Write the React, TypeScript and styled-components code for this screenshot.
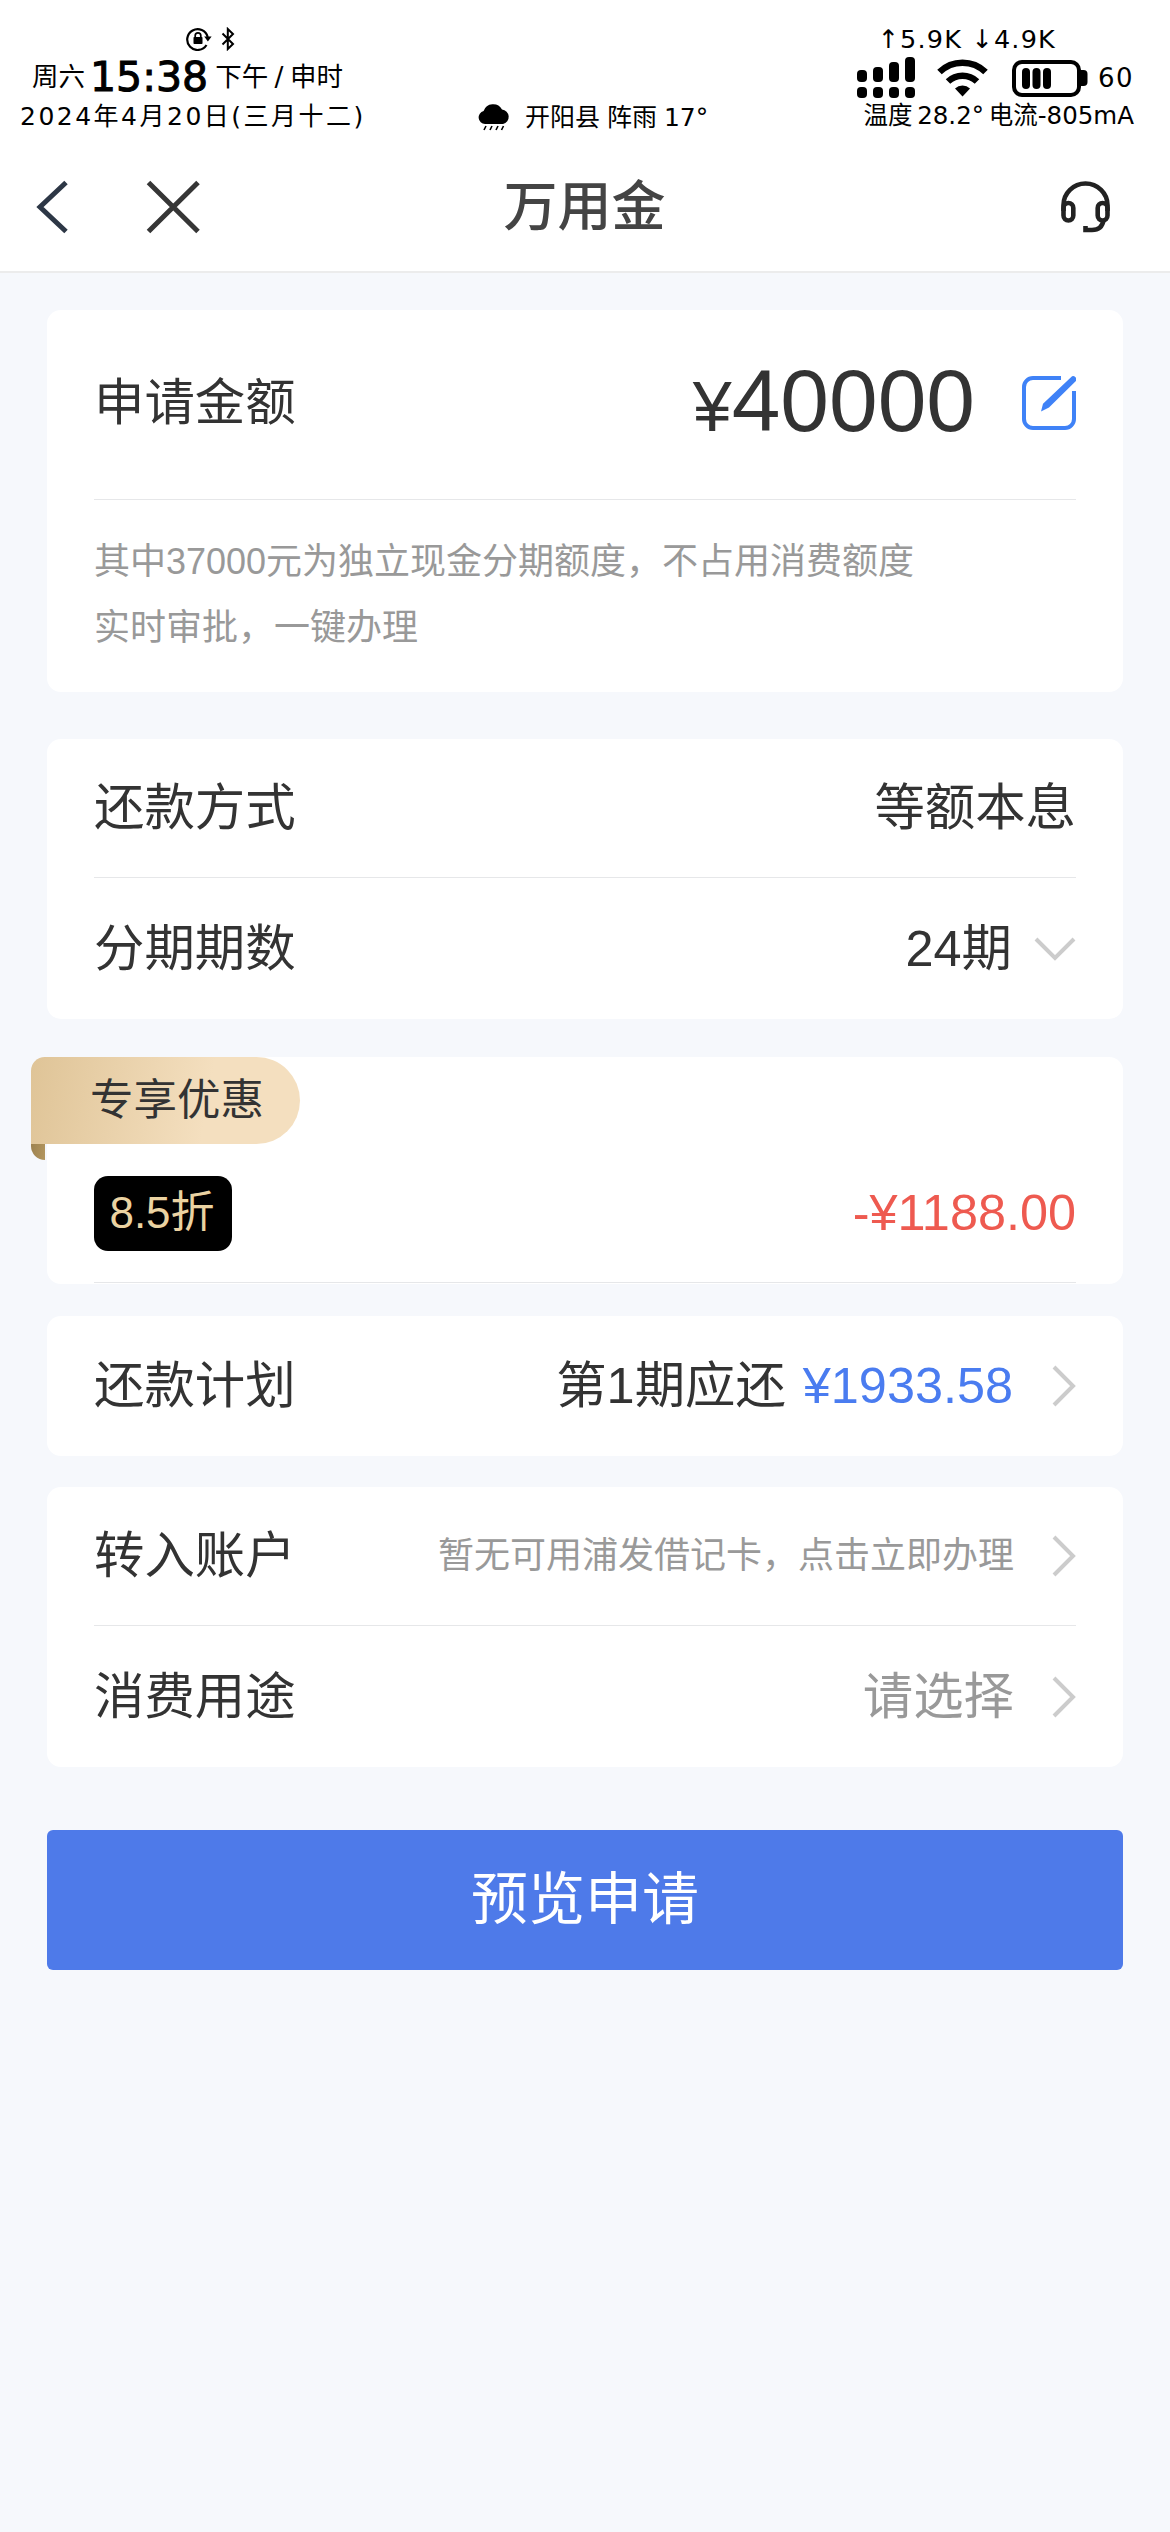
import React from 'react';
import styled, { createGlobalStyle } from 'styled-components';

const GlobalStyle = createGlobalStyle`
  * { box-sizing: border-box; }
  body {
    margin: 0;
    background: #f6f8fc;
    font-family: "Liberation Sans", "Noto Sans CJK SC", sans-serif;
    color: #333;
  }
`;

const Screen = styled.div`
  width: 1170px;
  height: 2532px;
  display: flex;
  flex-direction: column;
  overflow: hidden;
  background: #f6f8fc;
`;

const Header = styled.header`
  height: 273px;
  background: #fff;
  border-bottom: 2px solid #ececec;
`;

const StatusBar = styled.div`
  height: 140px;
  padding: 26px 36px 0 20px;
  display: grid;
  grid-template-columns: 420px 1fr 320px;
  color: #000;
`;

const StatusColumn = styled.div<{ $align?: string }>`
  display: flex;
  flex-direction: column;
  align-items: ${(p) => p.$align ?? 'flex-start'};
`;

const StatusLine = styled.div<{ $height: number; $indent?: number; $end?: number }>`
  height: ${(p) => p.$height}px;
  display: flex;
  align-items: center;
  padding-left: ${(p) => p.$indent ?? 0}px;
  padding-right: ${(p) => p.$end ?? 0}px;
`;

const StatusText = styled.span<{ $size?: number; $track?: number; $left?: number; $word?: number }>`
  font-family: "DejaVu Sans", "Noto Sans CJK SC", sans-serif;
  font-size: ${(p) => p.$size ?? 25}px;
  letter-spacing: ${(p) => p.$track ?? 0}px;
  word-spacing: ${(p) => p.$word ?? 0}px;
  margin-left: ${(p) => p.$left ?? 0}px;
  line-height: 1;
  white-space: nowrap;
`;

const Clock = styled(StatusText)`
  -webkit-text-stroke: 1px #000;
`;

const NavBar = styled.nav`
  height: 133px;
  padding: 0 60px 0 35px;
  display: grid;
  grid-template-columns: 300px 1fr 300px;
  align-items: center;
`;

const NavLeft = styled.div`
  display: flex;
  align-items: center;
  gap: 76px;
`;

const NavRight = styled.div`
  display: flex;
  justify-content: flex-end;
`;

const Title = styled.h1`
  margin: 1px 0 0 24px;
  font-size: 54px;
  line-height: 60px;
  font-weight: 500;
  color: #444;
  text-align: center;
`;

const Main = styled.main`
  display: flex;
  flex-direction: column;
  padding: 37px 47px 0;
`;

const Card = styled.section<{ $top?: number }>`
  margin-top: ${(p) => p.$top ?? 0}px;
  padding: 0 47px;
  background: #fff;
  border-radius: 14px;
`;

const Row = styled.div<{ $height: number; $divided?: boolean; $lift?: number }>`
  height: ${(p) => p.$height}px;
  padding-bottom: ${(p) => p.$lift ?? 0}px;
  display: flex;
  align-items: center;
  justify-content: space-between;
  border-bottom: ${(p) => (p.$divided ? '1px solid #e6e7e9' : 'none')};
`;

const Label = styled.span`
  font-size: 50.4px;
  line-height: 60px;
  white-space: nowrap;
`;

const Value = styled.div<{ $gap?: number }>`
  display: flex;
  align-items: center;
  gap: ${(p) => p.$gap ?? 0}px;
`;

const Money = styled.span<{ $color: string }>`
  font-size: 50.4px;
  line-height: 60px;
  color: ${(p) => p.$color};
`;

const Installment = styled(Label)`
  word-spacing: 3px;
`;

const Hint = styled.span<{ $size: number }>`
  font-size: ${(p) => p.$size}px;
  line-height: 60px;
  color: #999;
  white-space: nowrap;
`;

const Amount = styled.span`
  padding-top: 2px;
  font-size: 87.5px;
  line-height: 100px;
  white-space: nowrap;
`;

const Currency = styled.span`
  font-size: 70px;
`;

const Note = styled.p`
  margin: 0;
  padding: 29px 0 31px;
  font-size: 36px;
  line-height: 66px;
  color: #999;
`;

const PromoCard = styled(Card)`
  position: relative;
  height: 227px;
  padding-top: 87px;
`;

const Ribbon = styled.div`
  position: absolute;
  left: -16px;
  top: 0;
  width: 269px;
  height: 87px;
  padding-left: 59px;
  border-radius: 14px 44px 44px 0;
  background: linear-gradient(100deg, #dfc497 0%, #f4dfbf 65%, #f4dfbf 100%);
  font-size: 43.5px;
  line-height: 86px;
  white-space: nowrap;

  &::after {
    content: "";
    position: absolute;
    left: 0;
    top: 87px;
    width: 14px;
    height: 16px;
    border-radius: 0 0 0 14px;
    background: linear-gradient(100deg, #9d8250, #b3965f);
  }
`;

const Badge = styled.span`
  width: 138px;
  height: 75px;
  padding-right: 2px;
  border-radius: 14px;
  background: #000;
  color: #ebd3a2;
  font-size: 44px;
  line-height: 73px;
  text-align: center;
`;

const Submit = styled.button`
  margin-top: 63px;
  height: 140px;
  border: 0;
  border-radius: 6px;
  background: #4e7ae9;
  color: #fff;
  font-family: inherit;
  font-size: 57px;
  line-height: 60px;
  padding: 0 0 2px;
`;

const Icon = styled.svg<{ $left?: number }>`
  display: block;
  flex: none;
  fill: none;
  margin-left: ${(p) => p.$left ?? 0}px;
`;

const ChevronRight = () => (
  <Icon width="24" height="42" viewBox="0 0 24 42" stroke="#ccc" strokeWidth="4">
    <path d="M2 2 21 21 2 40" />
  </Icon>
);

const ChevronDown = () => (
  <Icon width="42" height="26" viewBox="0 0 42 26" stroke="#ccc" strokeWidth="4">
    <path d="M2 3 21 22 40 3" />
  </Icon>
);

const EditIcon = () => (
  <Icon width="54" height="54" viewBox="0 0 54 54" stroke="#3f82f7" strokeWidth="4">
    <path d="M39 2H11a9 9 0 0 0-9 9v32a9 9 0 0 0 9 9h32a9 9 0 0 0 9-9V15" />
    <path d="M49 1.200a3 3 0 0 1 4.400 4.200L27 31.500 19 35.500 21 27.800Z" fill="#3f82f7" stroke="none" />
  </Icon>
);

const Headset = () => (
  <Icon width="49" height="52" viewBox="0 0 49 52" stroke="#222" strokeWidth="4.6">
    <path d="M2.500 30V24a22 21.500 0 0 1 44 0V30" />
    <rect x="2.500" y="22" width="9.800" height="17.500" rx="4.900" />
    <rect x="36.700" y="22" width="9.800" height="17.500" rx="4.900" />
    <path d="M42.500 39C41.500 46 37 49 31 49H24.500V45" />
  </Icon>
);

const RotationLock = () => (
  <Icon width="26" height="24" viewBox="0 0 26 24" stroke="#000" strokeWidth="2.2">
    <path d="M20.500 18A10.400 10.400 0 1 1 21.700 10" />
    <path d="M18.200 9.400h7.400l-3.700 5Z" fill="#000" stroke="none" />
    <rect x="7.500" y="10" width="9" height="7" rx="0.8" fill="#000" stroke="none" />
    <path d="M9.200 10.500V8.600a2.800 2.800 0 0 1 5.600 0v1.900" strokeWidth="1.7" />
  </Icon>
);

const Bluetooth = () => (
  <Icon $left={9} width="14" height="24" viewBox="0 0 14 24" stroke="#000" strokeWidth="2">
    <path d="M1.500 6.500 12 17 6.800 22V2L12 7 1.500 17.500" />
  </Icon>
);

const RainCloud = () => (
  <Icon width="32" height="28" viewBox="0 0 32 28">
    <path d="M7 21a6.600 6.600 0 0 1-1.400-13A10 10 0 0 1 24 6.600 7.300 7.300 0 0 1 25 21Z" fill="#000" />
    <path d="M8 23 6 27M14 23l-2 4M20 23l-2 4M25.500 23l-2 4" stroke="#000" strokeWidth="1.6" />
  </Icon>
);

const Signal = () => (
  <Icon width="58" height="42" viewBox="0 0 58 42">
    {[0, 16, 32, 48].map((x, i) => (
      <g key={x} fill="#000">
        <rect x={x} y={[13, 10, 5, 0][i]} width="10" height={[12, 15, 20, 25][i]} rx="4" />
        <rect x={x} y="30" width="10" height="11" rx="4" />
      </g>
    ))}
  </Icon>
);

const Wifi = () => (
  <Icon $left={22} width="51" height="38" viewBox="0 0 51 38" stroke="#000">
    <path d="M2.500 13a33 33 0 0 1 46 0" strokeWidth="6.500" />
    <path d="M11 22.500a21 21 0 0 1 29 0" strokeWidth="6.500" />
    <path d="M25.500 37.500 18 29.500a10.800 10.800 0 0 1 15 0Z" fill="#000" stroke="none" />
  </Icon>
);

const Battery = () => (
  <Icon $left={24} width="76" height="37" viewBox="0 0 76 37">
    <rect x="2" y="2" width="65" height="33" rx="8" stroke="#000" strokeWidth="4" />
    <path d="M68 10h3.500a4 4 0 0 1 4 4v8a4 4 0 0 1-4 4H68Z" fill="#000" />
    <rect x="10" y="8" width="8" height="21" rx="4" fill="#000" />
    <rect x="20.500" y="8" width="8" height="21" rx="4" fill="#000" />
    <rect x="31" y="8" width="8" height="21" rx="4" fill="#000" />
  </Icon>
);

export default function App() {
  return (
    <Screen>
      <GlobalStyle />
      <Header>
        <StatusBar>
          <StatusColumn>
            <StatusLine $height={26} $indent={166}>
              <RotationLock />
              <Bluetooth />
            </StatusLine>
            <StatusLine $height={50} $indent={12}>
              <StatusText $size={26.5}>周六</StatusText>
              <Clock $size={41} $left={5}>15:38</Clock>
              <StatusText $size={26.5} $left={7} $word={-2}>下午 / 申时</StatusText>
            </StatusLine>
            <StatusLine $height={28}>
              <StatusText $track={2.5}>2024年4月20日(三月十二)</StatusText>
            </StatusLine>
          </StatusColumn>
          <StatusColumn>
            <StatusLine $height={76} />
            <StatusLine $height={30} $indent={38}>
              <RainCloud />
              <StatusText $left={15} $size={25} $word={-1}>开阳县 阵雨 17°</StatusText>
            </StatusLine>
          </StatusColumn>
          <StatusColumn $align="flex-end">
            <StatusLine $height={28} $end={78}>
              <StatusText $size={25.5} $track={1.2}>↑5.9K ↓4.9K</StatusText>
            </StatusLine>
            <StatusLine $height={48}>
              <Signal />
              <Wifi />
              <Battery />
              <StatusText $size={26} $left={10} $track={1.5}>60</StatusText>
            </StatusLine>
            <StatusLine $height={28}>
              <StatusText $size={24.5} $word={-3}>温度 28.2° 电流-805mA</StatusText>
            </StatusLine>
          </StatusColumn>
        </StatusBar>
        <NavBar>
          <NavLeft>
            <Icon width="34" height="54" viewBox="0 0 34 54" stroke="#2d3746" strokeWidth="5">
              <path d="M31 2.500 5 27 31 51.500" />
            </Icon>
            <Icon width="56" height="54" viewBox="0 0 56 54" stroke="#363636" strokeWidth="5">
              <path d="M3.500 2.500 53 51.500M53 2.500 3.500 51.500" />
            </Icon>
          </NavLeft>
          <Title>万用金</Title>
          <NavRight>
            <Headset />
          </NavRight>
        </NavBar>
      </Header>
      <Main>
        <Card>
          <Row $height={190} $divided $lift={3}>
            <Label>申请金额</Label>
            <Value $gap={47}>
              <Amount>
                <Currency>¥</Currency>40000
              </Amount>
              <EditIcon />
            </Value>
          </Row>
          <Note>
            其中37000元为独立现金分期额度，不占用消费额度
            <br />
            实时审批，一键办理
          </Note>
        </Card>
        <Card $top={47}>
          <Row $height={139} $divided>
            <Label>还款方式</Label>
            <Label>等额本息</Label>
          </Row>
          <Row $height={141}>
            <Label>分期期数</Label>
            <Value $gap={22}>
              <Label>24期</Label>
              <ChevronDown />
            </Value>
          </Row>
        </Card>
        <PromoCard $top={38}>
          <Ribbon>专享优惠</Ribbon>
          <Row $height={139} $divided>
            <Badge>8.5折</Badge>
            <Money $color="#ee5a50">-¥1188.00</Money>
          </Row>
        </PromoCard>
        <Card $top={32}>
          <Row $height={140}>
            <Label>还款计划</Label>
            <Value $gap={39}>
              <Installment>
                第1期应还 <Money $color="#4a7cf0">¥1933.58</Money>
              </Installment>
              <ChevronRight />
            </Value>
          </Row>
        </Card>
        <Card $top={31}>
          <Row $height={139} $divided>
            <Label>转入账户</Label>
            <Value $gap={38}>
              <Hint $size={36}>暂无可用浦发借记卡，点击立即办理</Hint>
              <ChevronRight />
            </Value>
          </Row>
          <Row $height={141}>
            <Label>消费用途</Label>
            <Value $gap={38}>
              <Hint $size={50.4}>请选择</Hint>
              <ChevronRight />
            </Value>
          </Row>
        </Card>
        <Submit>预览申请</Submit>
      </Main>
    </Screen>
  );
}
